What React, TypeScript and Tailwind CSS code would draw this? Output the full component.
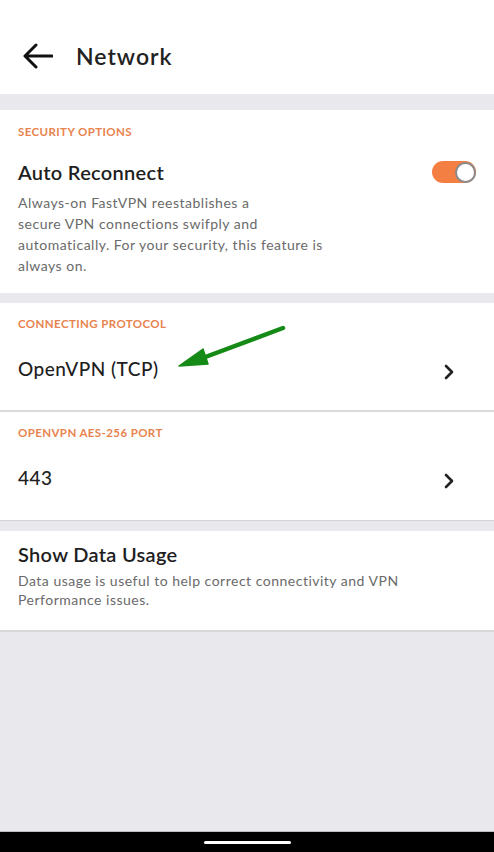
const font = { fontFamily: "Lato, 'Open Sans', sans-serif" };

function Chevron() {
  return (
    <svg width="12" height="18" viewBox="0 0 12 18" className="shrink-0 mt-[5px]">
      <polyline points="3,3 9,9 3,15" fill="none" stroke="#222" strokeWidth="2.6" strokeLinecap="round" strokeLinejoin="round" />
    </svg>
  );
}

function Label({ children }: { children: React.ReactNode }) {
  return <p className="text-[11.5px] leading-4 font-bold tracking-[0.4px] text-[#e8834e] uppercase">{children}</p>;
}

export default function App() {
  return (
    <div className="w-[494px] h-[852px] flex flex-col bg-[#e9e8ed] overflow-hidden" style={font}>
      {/* header */}
      <div className="h-[94px] bg-white flex items-center pl-[23px] pt-[18px] shrink-0">
        <svg width="30" height="26" viewBox="0 0 30 26">
          <path d="M29 13H3M13 2L2 13l11 11" fill="none" stroke="#111" strokeWidth="3" strokeLinecap="round" strokeLinejoin="round" />
        </svg>
        <h1 className="ml-[23px] text-[23px] font-semibold text-[#222] tracking-[1px]">Network</h1>
      </div>

      {/* security options */}
      <section className="mt-4 h-[183px] bg-white px-[18px] pt-[14px] shrink-0">
        <Label>Security Options</Label>
        <div className="mt-[20px] flex items-center justify-between">
          <h2 className="text-[20px] leading-6 font-semibold text-[#1e1e1e] tracking-[0.3px]">Auto Reconnect</h2>
          <div className="w-[44px] h-[22px] rounded-full bg-[#f47f43] flex items-center justify-end">
            <div className="w-[21px] h-[21px] rounded-full bg-white border-2 border-[#8a8a8a]" />
          </div>
        </div>
        <p className="mt-2 text-[14px] leading-[21px] text-[#6a6a6a] tracking-[0.5px]">
          Always-on FastVPN reestablishes a<br />
          secure VPN connections swifply and<br />
          automatically. For your security, this feature is<br />
          always on.
        </p>
      </section>

      {/* connecting protocol */}
      <section className="relative mt-[10px] h-[107px] bg-white px-[18px] pt-[13px] shrink-0">
        <Label>Connecting Protocol</Label>
        <div className="mt-[25px] flex items-center justify-between pr-[21px]">
          <span className="text-[19px] leading-6 font-medium text-[#1e1e1e] tracking-[0.5px]">OpenVPN (TCP)</span>
          <Chevron />
        </div>
        <svg className="absolute left-0 top-0" width="300" height="80" viewBox="0 0 300 80">
          <line x1="283" y1="25" x2="200" y2="56" stroke="#168a16" strokeWidth="4.5" strokeLinecap="round" />
          <polygon points="179,63 203,46 208,61" fill="#168a16" stroke="#168a16" strokeWidth="1.5" strokeLinejoin="round" />
        </svg>
      </section>
      <div className="h-[2px] bg-[#dadada] shrink-0" />

      {/* port */}
      <section className="h-[108px] bg-white px-[18px] pt-[13px] shrink-0">
        <Label>OpenVPN AES-256 Port</Label>
        <div className="mt-[25px] flex items-center justify-between pr-[21px]">
          <span className="text-[19px] leading-6 font-medium text-[#1e1e1e] tracking-[0.5px]">443</span>
          <Chevron />
        </div>
      </section>
      <div className="h-px bg-[#d4d4d4] shrink-0" />

      {/* data usage */}
      <section className="mt-[10px] h-[99px] bg-white px-[18px] pt-[11px] shrink-0">
        <h2 className="text-[20px] leading-6 font-semibold text-[#1e1e1e] tracking-[0.3px]">Show Data Usage</h2>
        <p className="mt-[5px] text-[14px] leading-[19px] text-[#6a6a6a] tracking-[0.5px]">
          Data usage is useful to help correct connectivity and VPN<br />
          Performance issues.
        </p>
      </section>
      <div className="h-[2px] bg-[#d8d8d8] shrink-0" />

      <div className="flex-1" />

      {/* nav bar */}
      <div className="h-[21px] bg-black border-t border-[#bdbdbd] flex justify-center pt-[9px] shrink-0">
        <div className="w-[87px] h-[3px] rounded-full bg-white" />
      </div>
    </div>
  );
}
